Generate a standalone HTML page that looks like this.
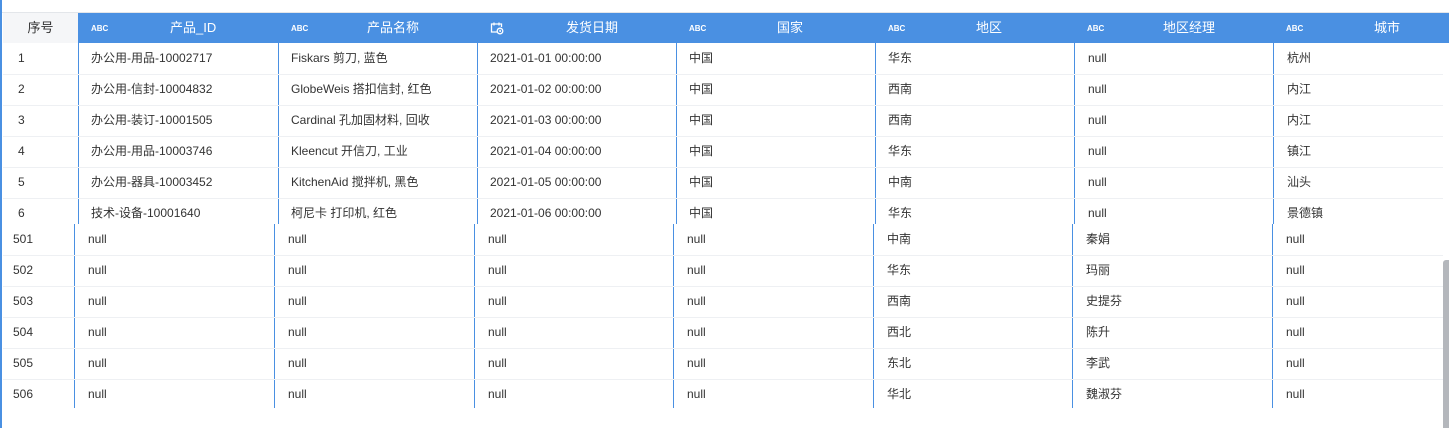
<!DOCTYPE html>
<html><head><meta charset="utf-8"><style>
*{margin:0;padding:0;box-sizing:border-box}
body{width:1449px;height:428px;background:#fff;position:relative;overflow:hidden;font-family:"Liberation Sans","Noto Sans CJK SC",sans-serif;font-size:12px;color:#333}
.a{position:absolute;white-space:nowrap}
.hd{position:absolute;top:13px;left:78px;width:1371px;height:30px;background:#4a90e2}
.h0{position:absolute;top:13px;left:3px;width:75px;height:30px;background:#f5f6f8;text-align:center;line-height:30px;font-size:13px}
.ht{color:#fff;font-size:13px;top:13px;line-height:30px}
.abc{color:#fff;font-size:8px;font-weight:bold;top:24px;font-family:"Liberation Sans Narrow","Liberation Sans",sans-serif}
.vl{position:absolute;width:1px;background:#4a90e2}
.hl{position:absolute;height:1px;background:#eef0f3;left:3px;width:1440px}
.c{position:absolute;line-height:31px;white-space:nowrap}
</style></head><body>
<div class="a" style="left:0;top:0;width:2px;height:428px;background:#4a90e2"></div>
<div class="a" style="left:2px;top:12px;width:1447px;height:1px;background:#e3e6ea"></div>
<div class="h0">序号</div>
<div class="hd"></div>
<div class="a abc" style="left:91px">ABC</div><div class="a ht" style="left:170px">产品_ID</div>
<div class="a abc" style="left:291px">ABC</div><div class="a ht" style="left:367px">产品名称</div>
<svg class="a" style="left:490px;top:21px" width="14" height="14" viewBox="0 0 14 14" fill="none" stroke="#fff" stroke-width="1.3"><path d="M7 11H1.5V3h10v3M4 1.5v3M9 1.5v3"/><circle cx="10" cy="10" r="2.8"/><path d="M10 8.8v1.4h1"/></svg>
<div class="a ht" style="left:566px">发货日期</div>
<div class="a abc" style="left:689px">ABC</div><div class="a ht" style="left:777px">国家</div>
<div class="a abc" style="left:888px">ABC</div><div class="a ht" style="left:976px">地区</div>
<div class="a abc" style="left:1087px">ABC</div><div class="a ht" style="left:1163px">地区经理</div>
<div class="a abc" style="left:1286px">ABC</div><div class="a ht" style="left:1374px">城市</div>

<!-- top section vertical lines -->
<div class="vl" style="left:78px;top:43px;height:181px"></div>
<div class="vl" style="left:278px;top:43px;height:181px"></div>
<div class="vl" style="left:477px;top:43px;height:181px"></div>
<div class="vl" style="left:676px;top:43px;height:181px"></div>
<div class="vl" style="left:875px;top:43px;height:181px"></div>
<div class="vl" style="left:1074px;top:43px;height:181px"></div>
<div class="vl" style="left:1273px;top:43px;height:181px"></div>
<!-- bottom section lines -->
<div class="vl" style="left:74px;top:224px;height:184px"></div>
<div class="vl" style="left:274px;top:224px;height:184px"></div>
<div class="vl" style="left:474px;top:224px;height:184px"></div>
<div class="vl" style="left:673px;top:224px;height:184px"></div>
<div class="vl" style="left:873px;top:224px;height:184px"></div>
<div class="vl" style="left:1072px;top:224px;height:184px"></div>
<div class="vl" style="left:1272px;top:224px;height:184px"></div>

<div class="hl" style="top:74px"></div><div class="hl" style="top:105px"></div><div class="hl" style="top:136px"></div><div class="hl" style="top:167px"></div><div class="hl" style="top:198px"></div>
<div class="hl" style="top:255px"></div><div class="hl" style="top:286px"></div><div class="hl" style="top:317px"></div><div class="hl" style="top:348px"></div><div class="hl" style="top:379px"></div>

<!-- top rows -->
<div class="c" style="top:43px;left:18px">1</div><div class="c" style="top:43px;left:91px">办公用-用品-10002717</div><div class="c" style="top:43px;left:291px">Fiskars 剪刀, 蓝色</div><div class="c" style="top:43px;left:490px">2021-01-01 00:00:00</div><div class="c" style="top:43px;left:689px">中国</div><div class="c" style="top:43px;left:888px">华东</div><div class="c" style="top:43px;left:1088px">null</div><div class="c" style="top:43px;left:1287px">杭州</div>
<div class="c" style="top:74px;left:18px">2</div><div class="c" style="top:74px;left:91px">办公用-信封-10004832</div><div class="c" style="top:74px;left:291px">GlobeWeis 搭扣信封, 红色</div><div class="c" style="top:74px;left:490px">2021-01-02 00:00:00</div><div class="c" style="top:74px;left:689px">中国</div><div class="c" style="top:74px;left:888px">西南</div><div class="c" style="top:74px;left:1088px">null</div><div class="c" style="top:74px;left:1287px">内江</div>
<div class="c" style="top:105px;left:18px">3</div><div class="c" style="top:105px;left:91px">办公用-装订-10001505</div><div class="c" style="top:105px;left:291px">Cardinal 孔加固材料, 回收</div><div class="c" style="top:105px;left:490px">2021-01-03 00:00:00</div><div class="c" style="top:105px;left:689px">中国</div><div class="c" style="top:105px;left:888px">西南</div><div class="c" style="top:105px;left:1088px">null</div><div class="c" style="top:105px;left:1287px">内江</div>
<div class="c" style="top:136px;left:18px">4</div><div class="c" style="top:136px;left:91px">办公用-用品-10003746</div><div class="c" style="top:136px;left:291px">Kleencut 开信刀, 工业</div><div class="c" style="top:136px;left:490px">2021-01-04 00:00:00</div><div class="c" style="top:136px;left:689px">中国</div><div class="c" style="top:136px;left:888px">华东</div><div class="c" style="top:136px;left:1088px">null</div><div class="c" style="top:136px;left:1287px">镇江</div>
<div class="c" style="top:167px;left:18px">5</div><div class="c" style="top:167px;left:91px">办公用-器具-10003452</div><div class="c" style="top:167px;left:291px">KitchenAid 搅拌机, 黑色</div><div class="c" style="top:167px;left:490px">2021-01-05 00:00:00</div><div class="c" style="top:167px;left:689px">中国</div><div class="c" style="top:167px;left:888px">中南</div><div class="c" style="top:167px;left:1088px">null</div><div class="c" style="top:167px;left:1287px">汕头</div>
<div class="c" style="top:198px;left:18px">6</div><div class="c" style="top:198px;left:91px">技术-设备-10001640</div><div class="c" style="top:198px;left:291px">柯尼卡 打印机, 红色</div><div class="c" style="top:198px;left:490px">2021-01-06 00:00:00</div><div class="c" style="top:198px;left:689px">中国</div><div class="c" style="top:198px;left:888px">华东</div><div class="c" style="top:198px;left:1088px">null</div><div class="c" style="top:198px;left:1287px">景德镇</div>

<!-- bottom rows -->
<div class="c" style="top:224px;left:13px">501</div><div class="c" style="top:224px;left:88px">null</div><div class="c" style="top:224px;left:288px">null</div><div class="c" style="top:224px;left:488px">null</div><div class="c" style="top:224px;left:687px">null</div><div class="c" style="top:224px;left:887px">中南</div><div class="c" style="top:224px;left:1086px">秦娟</div><div class="c" style="top:224px;left:1286px">null</div>
<div class="c" style="top:255px;left:13px">502</div><div class="c" style="top:255px;left:88px">null</div><div class="c" style="top:255px;left:288px">null</div><div class="c" style="top:255px;left:488px">null</div><div class="c" style="top:255px;left:687px">null</div><div class="c" style="top:255px;left:887px">华东</div><div class="c" style="top:255px;left:1086px">玛丽</div><div class="c" style="top:255px;left:1286px">null</div>
<div class="c" style="top:286px;left:13px">503</div><div class="c" style="top:286px;left:88px">null</div><div class="c" style="top:286px;left:288px">null</div><div class="c" style="top:286px;left:488px">null</div><div class="c" style="top:286px;left:687px">null</div><div class="c" style="top:286px;left:887px">西南</div><div class="c" style="top:286px;left:1086px">史提芬</div><div class="c" style="top:286px;left:1286px">null</div>
<div class="c" style="top:317px;left:13px">504</div><div class="c" style="top:317px;left:88px">null</div><div class="c" style="top:317px;left:288px">null</div><div class="c" style="top:317px;left:488px">null</div><div class="c" style="top:317px;left:687px">null</div><div class="c" style="top:317px;left:887px">西北</div><div class="c" style="top:317px;left:1086px">陈升</div><div class="c" style="top:317px;left:1286px">null</div>
<div class="c" style="top:348px;left:13px">505</div><div class="c" style="top:348px;left:88px">null</div><div class="c" style="top:348px;left:288px">null</div><div class="c" style="top:348px;left:488px">null</div><div class="c" style="top:348px;left:687px">null</div><div class="c" style="top:348px;left:887px">东北</div><div class="c" style="top:348px;left:1086px">李武</div><div class="c" style="top:348px;left:1286px">null</div>
<div class="c" style="top:379px;left:13px">506</div><div class="c" style="top:379px;left:88px">null</div><div class="c" style="top:379px;left:288px">null</div><div class="c" style="top:379px;left:488px">null</div><div class="c" style="top:379px;left:687px">null</div><div class="c" style="top:379px;left:887px">华北</div><div class="c" style="top:379px;left:1086px">魏淑芬</div><div class="c" style="top:379px;left:1286px">null</div>

<div class="a" style="left:1443px;top:260px;width:6px;height:168px;background:#b4b7bc;border-radius:3px 0 0 0"></div>
</body></html>
